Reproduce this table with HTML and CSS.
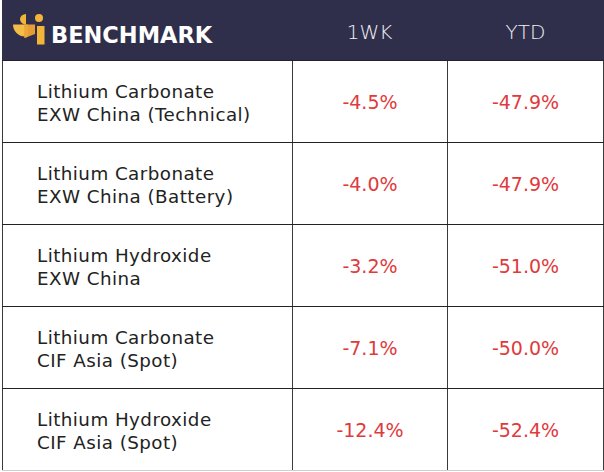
FILE: index.html
```html
<!DOCTYPE html>
<html>
<head>
<meta charset="utf-8">
<link rel="stylesheet" href="styles.css">
</head>
<body>
<div class="table">
  <div class="head">
    <div class="brand">
      <svg class="logo" width="34" height="31" viewBox="0 0 34 31">
        <path d="M14 0 A6 5.2 0 0 0 14 10.4 Z" fill="#f2b53a"/>
        <circle cx="27" cy="4" r="4" fill="#f2b53a"/>
        <path d="M1 10.5 L13 10.5 L13 22.5 A12 12 0 0 1 1 10.5 Z" fill="#f4bd48"/>
        <path d="M12.5 10.5 L23 10.5 L23 20 L12.5 24 Z" fill="#e79d36"/>
        <path d="M12.5 10.5 L16 10.5 L16 22.7 L12.5 24 Z" fill="#eda63b"/>
        <rect x="25" y="12" width="7.5" height="18.5" fill="#f2b53a"/>
      </svg>
      <span class="brand-name">BENCHMARK</span>
    </div>
    <div class="hcol">1WK</div>
    <div class="hcol">YTD</div>
  </div>
  <div class="row">
    <div class="name">Lithium Carbonate<br>EXW China (Technical)</div>
    <div class="val">-4.5%</div>
    <div class="val">-47.9%</div>
  </div>
  <div class="row">
    <div class="name">Lithium Carbonate<br>EXW China (Battery)</div>
    <div class="val">-4.0%</div>
    <div class="val">-47.9%</div>
  </div>
  <div class="row">
    <div class="name">Lithium Hydroxide<br>EXW China</div>
    <div class="val">-3.2%</div>
    <div class="val">-51.0%</div>
  </div>
  <div class="row">
    <div class="name">Lithium Carbonate<br>CIF Asia (Spot)</div>
    <div class="val">-7.1%</div>
    <div class="val">-50.0%</div>
  </div>
  <div class="row last">
    <div class="name">Lithium Hydroxide<br>CIF Asia (Spot)</div>
    <div class="val">-12.4%</div>
    <div class="val">-52.4%</div>
  </div>
</div>
</body>
</html>
```
FILE: styles.css
```css
html, body {
  margin: 0;
  padding: 0;
  background: #ffffff;
}
body {
  font-family: "DejaVu Sans", sans-serif;
  color: #222222;
}
.table {
  margin-left: 2px;
  width: 602px;
}
.head {
  display: grid;
  grid-template-columns: 290px 155px 157px;
  height: 60px;
  background: #302f4b;
  color: #ffffff;
}
.brand {
  display: flex;
  align-items: center;
  padding-left: 10px;
}
.logo {
  display: block;
  margin-top: -2px;
}
.brand-name {
  font-weight: 700;
  font-size: 22.5px;
  margin-left: 5px;
  margin-top: 10px;
}
.hcol {
  display: flex;
  align-items: center;
  justify-content: center;
  font-weight: 300;
  font-size: 20px;
  padding-top: 4px;
  color: #f2f2f6;
}
.row {
  display: grid;
  grid-template-columns: 290px 155px 157px;
  height: 82px;
  box-sizing: border-box;
  border-top: 1px solid #222222;
}
.row.last {
  border-bottom: 1px solid #cfcfcf;
  height: 83px;
}
.row > div {
  border-left: 1px solid #3a3a3a;
  display: flex;
  align-items: center;
}
.row > div:last-child {
  border-right: 1px solid #3a3a3a;
}
.name {
  padding-left: 34px;
  font-size: 18.3px;
  line-height: 23px;
  letter-spacing: 0.45px;
  padding-top: 2px;
}
.val {
  justify-content: center;
  color: #e03a3c;
  font-size: 19px;
  padding-top: 1px;
}
```
